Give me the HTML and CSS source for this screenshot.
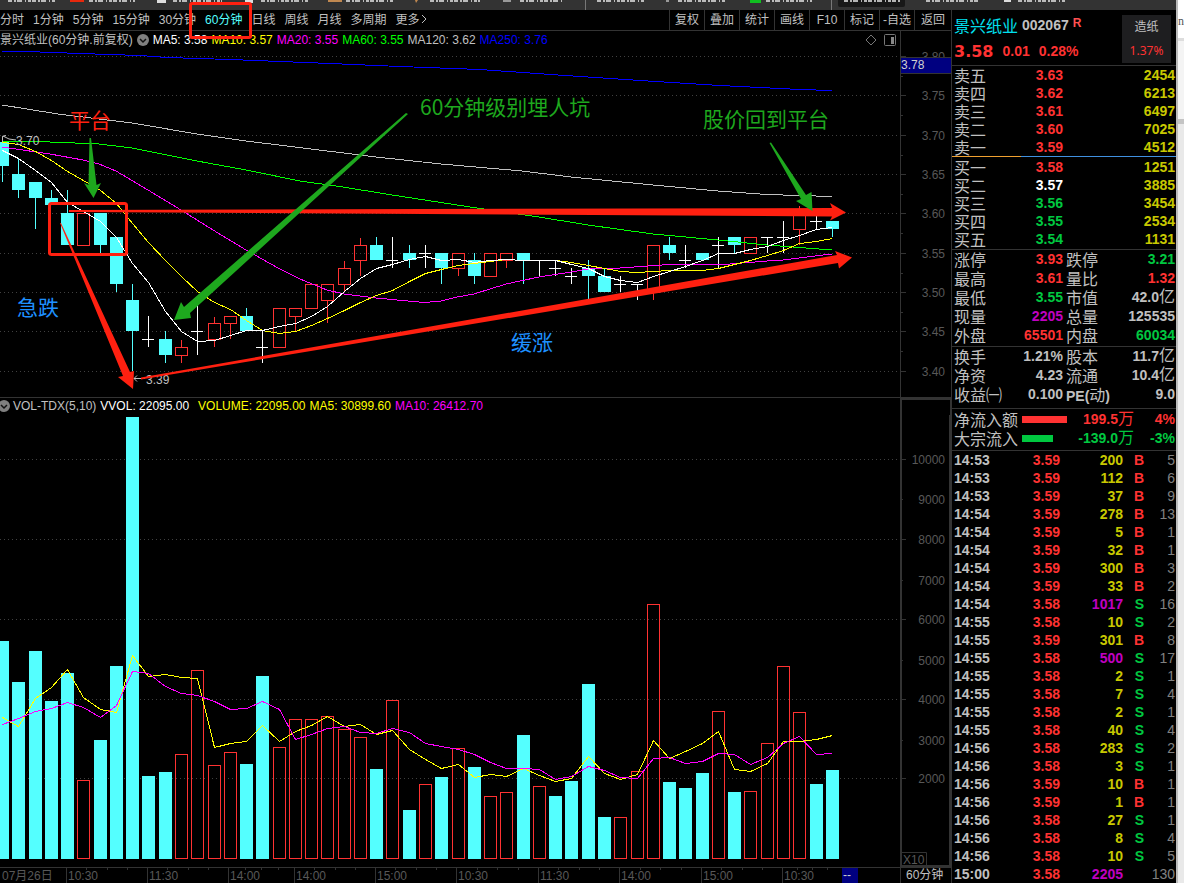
FILE: index.html
```html
<!DOCTYPE html>
<html lang="zh-CN">
<head>
<meta charset="utf-8">
<title>景兴纸业 002067</title>
<link rel="stylesheet" href="styles.css">
</head>
<body>
<div class="app">
  <header class="topstrip">
    <svg class="topmarks" width="1080" height="10" aria-hidden="true">
      <path class="tab" d="M838 0h67v5q0 2-2 2h-63q-2 0-2-2z"/>
      <path class="sep" d="M585.500 0v10M831.500 0v10"/>
      <path class="frag" d="M8 1H56M89 1H135M173 1H222M261 1H308M346 1H394M430 1H480M520 1H564M597 1H645M678 1H726M766 1H812M844 1H900M926 1H978M1018 1H1066"/>
      <path fill="#e8280c" d="M70 0h14v2H70z"/>
      <path fill="#ddd" d="M157 0h9v3h-9zM245 0h8v3h-8zM1004 0h7v2h-7z"/>
      <path fill="#c08850" d="M328 0h14v2h-14zM415 0h3l-2 3z"/>
      <path fill="#10c020" d="M750 0h11v3h-11z"/>
      <path fill="#999" d="M503 0h8v2h-8zM666 0h3v2h-3z"/>
    </svg>
  </header>
  <main class="work">
    <nav class="toolbar">
      <div class="periods">
        <button>分时</button><button>1分钟</button><button>5分钟</button><button>15分钟</button><button>30分钟</button><button class="on">60分钟</button><button>日线</button><button>周线</button><button>月线</button><button>多周期</button><button>更多<svg width="8" height="10"><path d="M2 1l4 4-4 4" fill="none" stroke="currentColor"/></svg></button>
      </div>
      <div class="tools">
        <button>复权</button><button>叠加</button><button>统计</button><button>画线</button><button>F10</button><button>标记</button><button>-自选</button><button>返回</button>
      </div>
      <div class="mark-box"></div>
    </nav>
    <div class="legend price-legend">
      <div class="legend-main">
        <span>景兴纸业(60分钟.前复权)</span>
        <svg class="chev" width="12" height="12"><circle cx="6" cy="6" r="6" fill="#808080"/><path d="M3 5l3 3 3-3" fill="none" stroke="#111" stroke-width="1.500"/></svg>
        <span class="white">MA5: 3.58</span><span class="yellow">MA10: 3.57</span><span class="magenta">MA20: 3.55</span><span class="lime">MA60: 3.55</span><span>MA120: 3.62</span><span class="blue">MA250: 3.76</span>
        <svg class="panel-icons" width="32" height="12"><path d="M6 1l5 5-5 5-5-5z" fill="none" stroke="#777"/><rect x="19.500" y=".5" width="11" height="11" rx="1" fill="none" stroke="#777"/><path d="M26 3h3v7h-3z" fill="#888"/></svg>
      </div>
      <div class="legend-axis"></div>
    </div>
    <svg class="chart" id="price" viewBox="0 50 951 347" role="img" aria-label="60分钟K线"></svg>
    <div class="legend volume-legend">
      <div class="legend-main">
        <svg class="chev" width="12" height="12"><circle cx="6" cy="6" r="6" fill="#808080"/><path d="M3 5l3 3 3-3" fill="none" stroke="#111" stroke-width="1.500"/></svg>
        <span>VOL-TDX(5,10)</span><span class="white">VVOL: 22095.00</span><span class="yellow volume">VOLUME: 22095.00</span><span class="yellow">MA5: 30899.60</span><span class="magenta">MA10: 26412.70</span>
      </div>
      <div class="legend-axis"></div>
    </div>
    <svg class="chart" id="volume" viewBox="0 415 951 468" role="img" aria-label="成交量"></svg>
  </main>
  <aside class="quote">
    <section class="head">
      <div>
        <div class="title"><span class="name">景兴纸业</span><b>002067</b><span class="badge">R</span></div>
        <div class="last"><b class="big">3.58</b><b>0.01</b><b>0.28%</b></div>
      </div>
      <div class="sector"><span>造纸</span><span class="red">1.37%</span></div>
    </section>
    <table class="book sell">
      <tr><th>卖五</th><td class="red">3.63</td><td>2454</td></tr>
      <tr><th>卖四</th><td class="red">3.62</td><td>6213</td></tr>
      <tr><th>卖三</th><td class="red">3.61</td><td>6497</td></tr>
      <tr><th>卖二</th><td class="red">3.60</td><td>7025</td></tr>
      <tr><th>卖一</th><td class="red">3.59</td><td>4512</td></tr>
    </table>
    <div class="ratio"><i></i></div>
    <table class="book buy">
      <tr><th>买一</th><td class="red">3.58</td><td>1251</td></tr>
      <tr><th>买二</th><td class="white">3.57</td><td>3885</td></tr>
      <tr><th>买三</th><td class="green">3.56</td><td>3454</td></tr>
      <tr><th>买四</th><td class="green">3.55</td><td>2534</td></tr>
      <tr><th>买五</th><td class="green">3.54</td><td>1131</td></tr>
    </table>
    <table class="stats">
      <tr><th>涨停</th><td class="red">3.93</td><th>跌停</th><td class="green">3.21</td></tr>
      <tr><th>最高</th><td class="red">3.61</td><th>量比</th><td class="red">1.32</td></tr>
      <tr><th>最低</th><td class="green">3.55</td><th>市值</th><td>42.0<i>亿</i></td></tr>
      <tr><th>现量</th><td class="purple">2205</td><th>总量</th><td>125535</td></tr>
      <tr><th>外盘</th><td class="red">65501</td><th>内盘</th><td class="green">60034</td></tr>
    </table>
    <table class="stats fundamentals">
      <tr><th>换手</th><td>1.21%</td><th>股本</th><td>11.7<i>亿</i></td></tr>
      <tr><th>净资</th><td>4.23</td><th>流通</th><td>10.4<i>亿</i></td></tr>
      <tr><th>收益㈠</th><td>0.100</td><th><b>PE(</b>动<b>)</b></th><td>9.0</td></tr>
    </table>
    <table class="flow">
      <tr class="red"><th>净流入额</th><td><i class="bar in"></i></td><td>199.5<i>万</i></td><td>4%</td></tr>
      <tr class="green"><th>大宗流入</th><td><i class="bar out"></i></td><td>-139.0<i>万</i></td><td>-3%</td></tr>
    </table>
    <table class="ticks"><tbody id="ticks"></tbody></table>
  </aside>
  <div class="behind"><span>n]</span></div>
</div>
<script src="chart.js"></script>
</body>
</html>
```
FILE: styles.css
```css
* { box-sizing: border-box; }
body {
  margin: 0;
  background: #000;
  color: #c0c0c0;
  font: 12px/18px "Liberation Sans", "Noto Sans CJK SC", sans-serif;
}
.app {
  display: grid;
  grid-template-columns: minmax(0, 1fr) 225px 8px;
  grid-template-rows: 10px auto;
  min-height: 100vh;
  overflow: hidden;
}
.topstrip { grid-column: 1 / 3; background: #333; overflow: hidden; }
.topmarks { display: block; }
.tab { fill: #181818; }
.sep { stroke: #777; }
.frag { stroke: #ddd; stroke-width: 2; stroke-dasharray: 4 2 2 1 5 3 1 2 3 1; opacity: .8; }

.white { color: #fff; }
.yellow { color: #ff0; }
.magenta { color: #f0f; }
.lime { color: #0f0; }
.blue { color: #00f; }
.red { color: #ff3232; }
.green { color: #00c840; }
.purple { color: #c000c0; }

button {
  margin: 0;
  padding: 0;
  border: 0;
  background: none;
  color: inherit;
  font: inherit;
  white-space: nowrap;
}
.work { grid-row: 2; min-width: 0; }
.toolbar {
  position: relative;
  display: flex;
  justify-content: space-between;
  height: 21px;
  border-bottom: 1px solid #333;
}
.periods { display: flex; gap: 9px; }
.periods .on { color: #54ffff; }
.tools { display: flex; }
.tools button { width: 35px; border-left: 1px solid #333; }
.tools button:last-child { width: 37px; }
.mark-box {
  position: absolute;
  left: 189px;
  top: -8px;
  width: 63px;
  height: 37px;
  border: 3px solid #ff2010;
  border-radius: 3px;
}
.legend { display: grid; grid-template-columns: 900fr 51fr; white-space: nowrap; }
.legend-main { display: flex; align-items: center; gap: 4px; min-width: 0; overflow: hidden; padding-bottom: 1px; }
.price-legend { height: 19px; }
.price-legend .legend-axis { border-left: 1px solid #333; }
.panel-icons { margin-left: auto; margin-right: 3px; }
.volume-legend { height: 18px; border-top: 1px solid #333; }
.volume-legend .chev { margin-left: -2px; margin-right: -1px; }
.volume-legend .volume { margin-left: 5px; }
.volume-legend .legend-axis { border: 2px solid #333; border-bottom: 0; border-right-width: 1px; }
.chart { display: block; width: 100%; height: auto; font-size: 12px; }
.note { font: 21px "Noto Sans CJK SC", sans-serif; }

.quote { grid-row: 2; border-left: 1px solid #333; font-size: 14px; font-weight: bold; }
.head { display: flex; justify-content: space-between; height: 56px; padding: 5px 5px 2px 2px; border-bottom: 1px solid #333; }
.title { display: flex; align-items: center; gap: 4px; height: 20px; color: #c0c0c0; white-space: nowrap; }
.name, th, td i { font-family: "Noto Sans CJK SC", sans-serif; font-size: 16px; font-weight: normal; font-style: normal; }
td i { line-height: 1px; }
.name { color: #00e0f0; }
.badge { align-self: flex-start; font-size: 12px; line-height: 16px; color: #ff5050; }
.last { display: flex; align-items: center; gap: 9px; height: 32px; color: #ff3232; }
.last .big { font: bold 16px "DejaVu Sans", sans-serif; }
.sector {
  display: flex;
  flex-direction: column;
  gap: 6px;
  align-items: center;
  width: 49px;
  height: 48px;
  padding-top: 3px;
  background: #1e1e20;
  font: 12px/18px "Noto Sans", "Noto Sans CJK SC", sans-serif;
}
table { width: 100%; table-layout: fixed; border-collapse: separate; border-spacing: 0; }
th, td { padding: 0; white-space: nowrap; vertical-align: middle; }
th { text-align: left; color: #c0c0c0; padding-left: 2px; }
td { text-align: right; }
.book tr { height: 18px; line-height: 18px; }
.book th { width: 60px; }
.book td:nth-child(2) { width: 51px; }
.book td:last-child { color: #c8c800; padding-right: 1px; }
.ratio { height: 2px; border-top: 1px solid #4090e0; }
.ratio i { display: block; width: 31%; height: 1px; margin-top: -1px; background: #f0a030; }
.stats { border-top: 1px solid #333; }
.buy { margin-bottom: 1px; }
.stats tr { height: 19px; line-height: 19px; }
.stats th { width: 50px; }
.stats td { width: 61px; }
.stats th:nth-child(3) { padding-left: 3px; }
.stats td:last-child { width: auto; padding-right: 1px; }
.stats th b { font: bold 14px/1px "Liberation Sans", sans-serif; }
.fundamentals { margin-top: 1px; margin-bottom: 4px; }
.flow { border-top: 1px solid #333; border-bottom: 1px solid #333; padding: 1px 0 2px; }
.flow tr { height: 19px; line-height: 19px; }
.flow th { width: 70px; }
.flow td:nth-child(2) { width: 47px; text-align: left; }
.flow td:nth-child(3) { width: 65px; }
.flow td:last-child { padding-right: 1px; }
.bar { display: block; height: 7px; background: currentColor; }
.bar.in { width: 45px; }
.bar.out { width: 31px; }
.ticks tr { height: 18px; line-height: 18px; }
.ticks td:nth-child(1) { width: 50px; padding-left: 2px; text-align: left; color: #c0c0c0; }
.ticks td:nth-child(2) { width: 58px; }
.ticks td:nth-child(3) { width: 63px; color: #c8c800; }
.ticks td:nth-child(3).purple { color: #c000c0; }
.ticks td:nth-child(4) { width: 21px; }
.ticks td:nth-child(5) { padding-right: 1px; color: #808080; font-weight: normal; }

.behind {
  grid-column: 3;
  grid-row: 1 / 3;
  padding-top: 12px;
  overflow: hidden;
  border-left: 2px solid #bbb;
  background: linear-gradient(#fff 38px, #ddd 38px, #ddd 41px, #f4f4f4 41px, #f4f4f4 119px, #c4c4c4 119px, #c4c4c4 124px, #e9e9e9 124px);
  color: #555;
  font: 12px/18px "Liberation Serif", serif;
}
```
FILE: chart.js
```js
const up = '#ff3232', down = '#54ffff', line = '#333', dim = '#585858';
const X = i => 2 + Math.round(i * 16.27);
const rect = (x, y, w, h, fill, stroke) =>
  `<rect x="${x}" y="${y}" width="${w}" height="${h}" fill="${fill}"${stroke ? ` stroke="${stroke}"` : ''}/>`;
const path = (d, stroke, extra = '') => `<path d="${d}" fill="none" stroke="${stroke}" ${extra}/>`;
const text = (x, y, s, fill, extra = '') => `<text x="${x}" y="${y}" fill="${fill}" ${extra}>${s}</text>`;
const poly = (pts, stroke) => `<polyline points="${pts}" fill="none" stroke="${stroke}" shape-rendering="crispEdges"/>`;
const series = (ys, stroke) => poly(ys.map((y, i) => `${X(i) + .5},${y + .5}`).join(' '), stroke);
const dots = y => path(`M0 ${y + .5}H900`, '#404040', 'stroke-dasharray="1 3"');

/* kind, high, body top, body bottom, low; for dojis: high, close, low */
const candles = [
  ['c',138,142,166,182],['c',158,174,190,198],['c',182,182,198,229],['c',190,198,205,205],['c',190,213,245,245],
  ['r',213,213,245,245],['c',213,213,245,253],['c',237,237,284,292],['c',284,300,331,371],['w',316,339,347],
  ['c',331,339,355,363],['r',340,347,355,363],['w',303,331,355],['r',317,323,339,347],['r',316,316,323,339],
  ['c',308,316,331,331],['w',331,347,363],['r',308,308,347,347],['r',308,308,316,331],['r',284,284,308,308],
  ['r',284,284,300,323],['r',261,268,284,292],['r',238,245,260,276],['c',237,245,260,260],['w',237,260,268],
  ['c',245,253,260,268],['w',245,253,268],['c',253,253,268,284],['r',253,253,268,276],['c',253,260,276,284],
  ['r',253,253,276,276],['r',253,253,260,268],['c',253,253,260,284],['w',260,260,276],['w',260,268,276],
  ['w',268,276,284],['c',260,268,276,299],['c',268,276,292,292],['w',276,284,292],['w',284,284,300],
  ['r',245,245,292,300],['c',237,245,253,260],['w',245,260,268],['c',253,253,260,260],['w',237,245,268],
  ['c',237,237,245,253],['r',237,237,253,253],['w',237,237,253],['w',221,237,253],['r',206,213,229,245],
  ['w',214,221,229],['c',221,221,229,237]
];
let p = '';
[56,95,135,174,213,253,292,331,371].forEach((y, i) => {
  p += dots(y) + path(`M901 ${y + .5}h5` + (i < 8 ? `M901 ${y + 20.5}h2` : ''), line);
  p += text(945, y + 5, (3.8 - i * .05).toFixed(2), dim, 'text-anchor="end"');
});
p += path('M900.5 50V397', line) + rect(901, 57, 50, 16, '#000080') + path('M901 57.5h50M901 73.5h50', line) + text(901, 69, '3.78', '#d0d0d0');
candles.forEach(([k, hi, a, b, lo], i) => {
  const x = X(i);
  if (k === 'w') p += rect(x, hi, 1, b - hi, '#fff') + rect(x - 6, a, 12, 1, '#fff');
  else if (k === 'c') p += rect(x, hi, 1, lo - hi, down) + rect(x - 6, a, 13, b - a, down);
  else p += rect(x, hi, 1, a - hi, up) + rect(x, b, 1, lo - b, up) + rect(x - 5.5, a + .5, 12, b - a, 'none', up);
});
p += poly('2,51.5 26,51.5 80,53.5 140,55.5 167,57.5 230,59.5 330,63.5 400,66.5 480,69.5 565,75.5 640,80.5 720,85.500 760,87.5 800,89.5 832,90.5', '#00f');
p += poly('2,105 58,114 132,123 197,134 246,141 295,147 376,157 441,164 522,171 571,177 653,185 718,191 760,194 783,195 832,196.500', '#c0c0c0');
p += poly('2,141.5 50,142 99,144 132,148 197,161 246,170 300,181 343,187 392,195 457,205 477,208 539,217 588,225 653,234 718,240 767,245 832,250', '#0f0');
p += poly('2,147 50,154 83,160 99,164 116,171 148,190 181,210 213,230 246,250 278,268 300,279 327,290 344,294 376,298 408,301 425,302.500 441,301 457,297 474,294 506,284 539,277 571,272 588,269 620,268 669,264.500 718,265 767,261 783,260 815,256 832,254', '#f0f');
p += series([142,144,151,160,171,180,190,203,223,242,260,276,291,302,309,320,330,333,331,325,318,310,302,295,290,281,273,269,265,263,261,259,260,260,260,262,265,268,271,272,271,270,270,270,268,264,260,255,250,243,241,238], '#ff0');
p += series([150,158,170,182,202,211,221,237,263,282,311,331,341,340,335,330,330,326,323,316,306,291,278,268,264,259,256,260,259,262,260,259,260,260,260,264,268,276,280,282,276,271,266,260,253,253,249,246,240,235,229,227], '#fff');
p += path('M2.5 142v-5M2 136.5l4-1M3 136l6 3 7 1', '#c0c0c0') + text(16, 145, '3.70', '#c0c0c0');
p += path('M134 378.500h11M137 375.500l-3 3 3 3', '#c0c0c0') + text(146, 384, '3.39', '#c0c0c0');
const red = '#ff2010', grass = '#1ea81e';
p += `<rect x="49.500" y="203.500" width="77" height="51" rx="2" fill="none" stroke="${red}" stroke-width="3"/>`;
p += `<g fill="${red}"><path d="M60 223l1 0L130 372l4-1-1 18-15-12 5-1z"/><path d="M69 210L832 208l-2-5 16 9.500-16 8 2-4L69 212z"/><path d="M141 377.500L837 255l-2-4 17 6.500-13 11-1-5.500L141 379.500z"/></g>`;
p += `<g fill="${grass}"><path d="M89.500 138h1.500l5.500 47 4.500-2-7.500 15-9.500-15 4.500 2z"/><path d="M406 113l2 1L190 313l1 5-17 2 7-18 3 5z"/><path d="M769.500 143l1.500-.5L806 195l5.500-3 1 19-16.500-10 5-2z"/></g>`;
p += `<g class="note">` + text(69, 128, '平台', red) + text(420, 115, '60分钟级别埋人坑', grass) + text(703, 127, '股价回到平台', grass) + text(17, 315, '急跌', '#1e90ff') + text(511, 350, '缓涨', '#1e90ff') + `</g>`;
document.getElementById('price').innerHTML = p;

/* volume bar tops; negative marks a rising bar */
const vols = [641,682,651,701,673,-780,740,666,417,776,772,-754,-670,-765,-752,764,676,-747,-719,-719,-716,-729,-737,769,-700,810,-784,777,-748,767,-796,-792,735,-786,796,781,684,817,-817,-771,-604,782,788,773,-711,792,-791,-743,-666,-712,784,770];
let v = '';
[459,499,539,580,619,660,699,740,778].forEach((y, i) => {
  const major = i % 2 === 0;
  if (major) v += dots(y);
  v += path(`M902 ${y + .5}h${major ? 4 : 1}`, line) + text(945, y + 5, 10000 - i * 1000, dim, 'text-anchor="end"');
});
vols.forEach((t, i) => {
  const x = X(i);
  v += t > 0 ? rect(x - 6, t, 13, 859 - t, down) : rect(x - 5.5, -t + .5, 12, 858 + t, 'none', up);
});
v += series([717,726,698,687,669,697,709,712,655,676,674,677,678,747,743,741,725,741,731,725,716,726,724,734,730,749,759,768,764,777,774,776,768,775,781,778,756,773,779,774,740,758,751,743,731,769,771,763,741,741,739,735], '#ff0');
v += series([724,718,711,708,702,707,717,705,671,673,686,693,695,701,709,708,701,709,739,734,728,726,732,733,728,732,743,746,749,754,762,768,768,769,779,776,766,770,777,778,758,757,763,761,753,754,764,757,743,736,754,753], '#f0f');
v += path('M901 415V866H950V415', line, 'stroke-width="2"') + path('M902 852.5h24.5V866M0 867.5H951M900.5 867V883', line) + text(903, 864, 'X10', dim);
v += text(2, 880, '07月26日', dim);
const marks = [66,147,228,294,375,456,538,619,701,782];
['10:30','11:30','14:00','14:00','15:00','10:30','11:30','14:00','15:00','10:30'].forEach((s, i) => {
  const x = marks[i], step = ((marks[i + 1] || 842) - x) / 4;
  v += path(`M${x + .5} 868v15` + [1,2,3].map(n => `M${Math.round(x + n * step) + .5} 868v2`).join(''), line) + text(x + 2, 880, s, dim);
});
v += rect(842, 868, 16, 15, '#000080') + text(843, 879, '--', '#d0d0d0') + text(906, 879, '60分钟', '#c0c0c0');
document.getElementById('volume').innerHTML = v;

const trades = [
  ['14:53','3.59',200,'B',5],['14:53','3.59',112,'B',6],['14:53','3.59',37,'B',9],['14:54','3.59',278,'B',13],
  ['14:54','3.59',5,'B',1],['14:54','3.59',32,'B',1],['14:54','3.59',300,'B',3],['14:54','3.59',33,'B',2],
  ['14:54','3.58',1017,'S',16],['14:55','3.58',10,'S',2],['14:55','3.59',301,'B',8],['14:55','3.58',500,'S',17],
  ['14:55','3.58',2,'S',1],['14:55','3.58',7,'S',4],['14:55','3.58',2,'S',1],['14:55','3.58',40,'S',4],
  ['14:56','3.58',283,'S',2],['14:56','3.58',3,'S',1],['14:56','3.59',10,'B',1],['14:56','3.59',1,'B',1],
  ['14:56','3.58',27,'S',1],['14:56','3.58',8,'S',4],['14:56','3.58',10,'S',5],['15:00','3.58',2205,'',130]
];
document.getElementById('ticks').innerHTML = trades.map(([t, price, n, side, k]) =>
  `<tr><td>${t}</td><td class="red">${price}</td><td class="${n >= 500 ? 'purple' : ''}">${n}</td><td class="${side === 'B' ? 'red' : 'green'}">${side}</td><td>${k}</td></tr>`).join('');
```
